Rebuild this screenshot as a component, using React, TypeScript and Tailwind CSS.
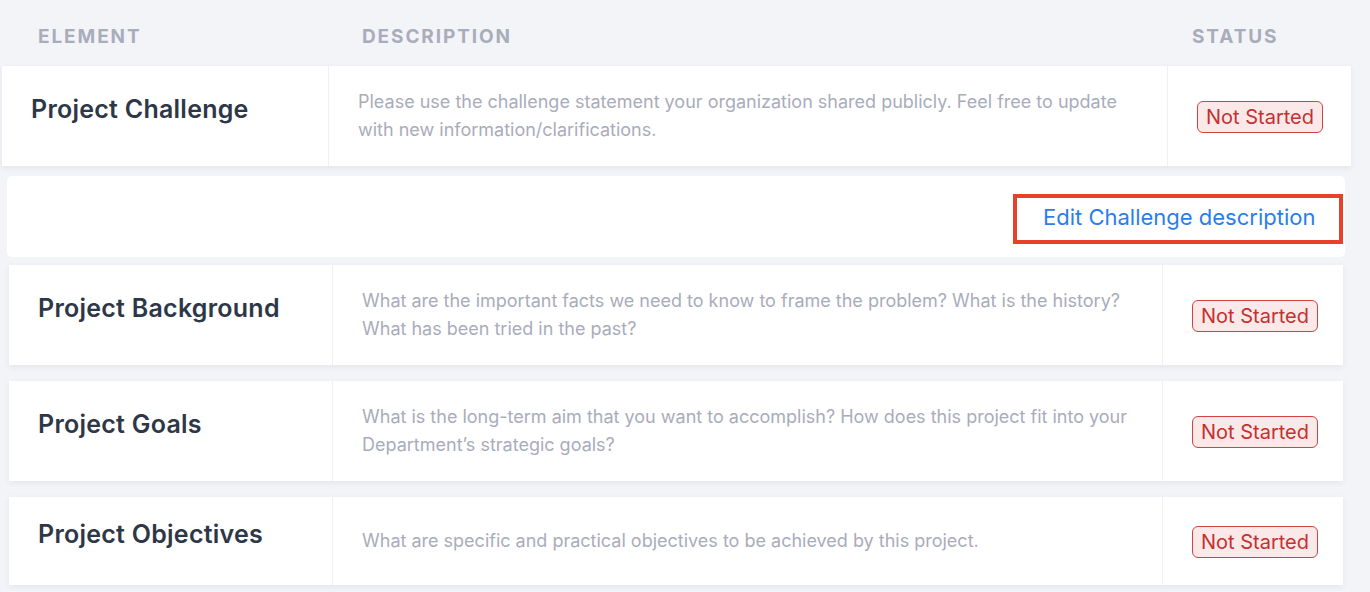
type Row = {
  title: string;
  desc: string[];
  height: string;
};

const rows: Row[] = [
  {
    title: "Project Background",
    desc: [
      "What are the important facts we need to know to frame the problem? What is the history?",
      "What has been tried in the past?",
    ],
    height: "h-[100px]",
  },
  {
    title: "Project Goals",
    desc: [
      "What is the long-term aim that you want to accomplish? How does this project fit into your",
      "Department\u2019s strategic goals?",
    ],
    height: "h-[100px]",
  },
  {
    title: "Project Objectives",
    desc: ["What are specific and practical objectives to be achieved by this project."],
    height: "h-[88px]",
  },
];

function StatusBadge() {
  return (
    <span className="mt-[2px] inline-flex h-[32px] w-[126px] items-center justify-center rounded-[6px] border border-[#d14343] bg-[#fbe9e9] text-[20px] text-[#c53030]">
      Not Started
    </span>
  );
}

function ElementRow({ title, desc, height }: Row) {
  return (
    <div className={`ml-[9px] flex w-[1334px] bg-white shadow-[0_2px_6px_rgba(30,40,80,0.07)] ${height}`}>
      <div className="flex w-[324px] items-center border-r border-[#f1f1f4] pb-[12px] pl-[29px]">
        <span className="text-[25px] font-semibold tracking-[0.01em] text-[#2e3748]">{title}</span>
      </div>
      <div className="flex w-[830px] flex-col justify-center border-r border-[#f1f1f4] pl-[29px] text-[18px] leading-[28px] text-[#a9acbb]">
        {desc.map((line) => (
          <span key={line}>{line}</span>
        ))}
      </div>
      <div className="flex flex-1 items-center pl-[29px]">
        <StatusBadge />
      </div>
    </div>
  );
}

export default function App() {
  return (
    <div className="min-h-[592px] bg-[#f3f4f8] font-['Inter',sans-serif]">
      {/* header */}
      <div className="flex h-[66px] items-center pt-[8px] text-[19px] font-bold uppercase tracking-[0.1em] text-[#a9adbb]">
        <span className="ml-[38px] w-[324px]">Element</span>
        <span className="w-[830px]">Description</span>
        <span>Status</span>
      </div>

      {/* challenge row (hovered, slightly larger) */}
      <div className="ml-[2px] flex h-[100px] w-[1349px] bg-white shadow-[0_2px_6px_rgba(30,40,80,0.07)]">
        <div className="flex w-[327px] items-center border-r border-[#f1f1f4] pb-[12px] pl-[29px]">
          <span className="text-[25px] font-semibold tracking-[0.01em] text-[#2e3748]">Project Challenge</span>
        </div>
        <div className="flex w-[839px] flex-col justify-center border-r border-[#f1f1f4] pl-[29px] text-[18px] leading-[28px] text-[#a9acbb]">
          <span>Please use the challenge statement your organization shared publicly. Feel free to update</span>
          <span>with new information/clarifications.</span>
        </div>
        <div className="flex flex-1 items-center pl-[29px]">
          <StatusBadge />
        </div>
      </div>

      {/* edit link */}
      <div className="ml-[7px] mt-[10px] flex h-[81px] w-[1338px] items-start justify-end rounded-[5px] bg-white">
        <div className="mr-[2px] mt-[18px] flex h-[50px] w-[330px] items-center border-[4px] border-[#e8412a] pb-[3px] pl-[26px]">
          <a className="text-[22px] text-[#2b7de9]">Edit Challenge description</a>
        </div>
      </div>

      <div className="mt-[8px] flex flex-col gap-[16px] pb-[7px]">
        {rows.map((r) => (
          <ElementRow key={r.title} {...r} />
        ))}
      </div>
    </div>
  );
}
